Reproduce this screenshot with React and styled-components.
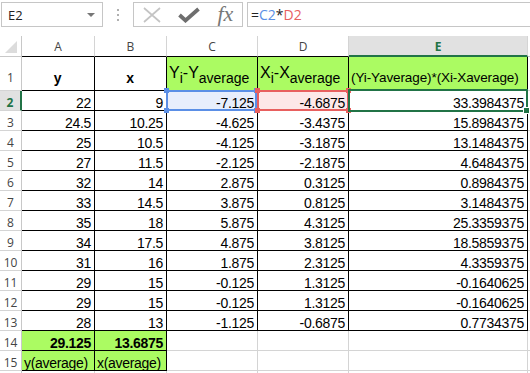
import React from "react";
import styled, { createGlobalStyle } from "styled-components";

const GRID = "#d4d4d4";
const HEAD_LINE = "#c8c8c8";
const BLACK = "#000";
const LIME = "#abfb62";
const XL_GREEN = "#217346";
const REF_BLUE = "#5b8fe6";
const REF_RED = "#e8605f";
const UI_FONT = `"Open Sans", "Noto Sans", Arial, sans-serif`;

const GlobalStyle = createGlobalStyle`
  html, body {
    margin: 0;
    padding: 0;
    background: #fff;
  }
  body {
    overflow: hidden;
  }
  * {
    box-sizing: border-box;
  }
`;

const Page = styled.div`
  width: 530px;
  height: 373px;
  overflow: hidden;
  display: flex;
  flex-direction: column;
  font-family: "Liberation Sans", Arial, sans-serif;
`;

/* formula bar */
const Toolbar = styled.div`
  height: 36px;
  flex: none;
  display: flex;
  align-items: flex-start;
  padding: 2px 0 0 1px;
`;

const NameBox = styled.div`
  width: 102px;
  height: 25px;
  border: 1px solid #c6c6c6;
  display: flex;
  align-items: center;
  justify-content: space-between;
  padding: 0 7px 0 6px;
  font: 13px ${UI_FONT};
  color: #222;
`;

const Caret = styled.span`
  width: 0;
  height: 0;
  border-left: 4px solid transparent;
  border-right: 4px solid transparent;
  border-top: 4px solid #777;
`;

const Dots = styled.div`
  width: 30px;
  height: 25px;
  display: flex;
  flex-direction: column;
  align-items: center;
  justify-content: center;
  gap: 3px;
`;

const Dot = styled.span`
  width: 2px;
  height: 2px;
  background: #b0b0b0;
`;

const FxButtons = styled.div`
  width: 110px;
  height: 25px;
  border: 1px solid #c6c6c6;
  display: flex;
  align-items: center;
  justify-content: space-around;
`;

const FxLabel = styled.span`
  font: italic 22px "Liberation Serif", "DejaVu Serif", serif;
  color: #777;
  line-height: 22px;
  margin-top: -2px;
`;

const FormulaBox = styled.div`
  flex: 1;
  margin-left: 4px;
  height: 25px;
  border: 1px solid #c6c6c6;
  border-right: none;
  display: flex;
  align-items: center;
  padding-left: 3px;
  font: 14px ${UI_FONT};
  color: #222;
`;

const Ref = styled.span`
  color: ${(p) => p.$color};
`;

/* sheet */
const Sheet = styled.div`
  flex: 1;
  display: grid;
  grid-template-columns: 22px 73px 72px 91px 91px 179px 1fr;
  grid-template-rows: 21px 34px repeat(14, 20px) 1fr;
  overflow: hidden;
`;

const Corner = styled.div`
  position: relative;
  border-right: 1px solid ${HEAD_LINE};
  border-bottom: 1px solid ${HEAD_LINE};
  &::after {
    content: "";
    position: absolute;
    right: 4px;
    bottom: 3px;
    border-left: 12px solid transparent;
    border-bottom: 12px solid #dcdcdc;
  }
`;

const ColHead = styled.div`
  display: flex;
  align-items: center;
  justify-content: center;
  padding-top: 1px;
  border-right: ${(p) => (p.$last ? "none" : `1px solid ${GRID}`)};
  border-bottom: ${(p) =>
    p.$active ? `2px solid ${XL_GREEN}` : `1px solid ${p.$edge || HEAD_LINE}`};
  background: ${(p) => (p.$active ? "#e1e1e1" : "#fff")};
  color: ${(p) => (p.$active ? XL_GREEN : "#444")};
  font: ${(p) => (p.$active ? 700 : 400)} 12px ${UI_FONT};
`;

const RowHead = styled.div`
  display: flex;
  align-items: center;
  justify-content: center;
  padding-top: ${(p) => (p.$tall ? 8 : 3)}px;
  border-right: ${(p) =>
    p.$active ? `2px solid ${XL_GREEN}` : `1px solid ${HEAD_LINE}`};
  border-bottom: 1px solid ${GRID};
  background: ${(p) => (p.$active ? "#e1e1e1" : "#fff")};
  color: ${(p) => (p.$active ? XL_GREEN : "#444")};
  font: ${(p) => (p.$active ? 700 : 400)} 12px ${UI_FONT};
  overflow: hidden;
`;

const Cell = styled.div`
  position: relative;
  display: flex;
  align-items: flex-end;
  justify-content: ${(p) =>
    p.$align === "left" ? "flex-start" : p.$align === "center" ? "center" : "flex-end"};
  padding: 0 3px ${(p) => (p.$tall ? 5 : 0)}px 2px;
  background: ${(p) => p.$bg || "#fff"};
  border-right: ${(p) => (p.$last ? "none" : `1px solid ${p.$edge || GRID}`)};
  border-bottom: 1px solid ${(p) => p.$edge || GRID};
  font-size: 14px;
  letter-spacing: -0.3px;
  line-height: 14px;
  font-weight: ${(p) => (p.$bold ? 700 : 400)};
  color: #000;
  white-space: nowrap;
`;

const Big = styled.span`
  font-size: 16px;
  letter-spacing: 0;
  line-height: 16px;
  margin-bottom: 2px;
`;

const Sub = styled.span`
  font-size: 14px;
  vertical-align: -5px;
  line-height: 10px;
`;

const Small = styled.span`
  font-size: 13.5px;
  letter-spacing: -0.1px;
  line-height: 14px;
`;

const Selection = styled.span`
  position: absolute;
  z-index: 2;
  top: ${(p) => (p.$thick ? -2 : -1)}px;
  left: -1px;
  right: ${(p) => (p.$inner ? 0 : -1)}px;
  bottom: ${(p) => (p.$thick ? -2 : -1)}px;
  border: 2px solid ${(p) => p.$color};
  pointer-events: none;
`;

const Handle = styled.span`
  position: absolute;
  width: ${(p) => (p.$big ? 7 : 5)}px;
  height: ${(p) => (p.$big ? 7 : 5)}px;
  background: ${(p) => p.$color};
  border: ${(p) => (p.$big ? "1px solid #fff" : "none")};
  ${(p) => (p.$v === "top" ? "top: -4px;" : "bottom: -4px;")}
  ${(p) => (p.$h === "left" ? "left: -4px;" : "right: -4px;")}
`;

const cols = ["A", "B", "C", "D", "E"];

const rows = [
  ["22", "9", "-7.125", "-4.6875", "33.3984375"],
  ["24.5", "10.25", "-4.625", "-3.4375", "15.8984375"],
  ["25", "10.5", "-4.125", "-3.1875", "13.1484375"],
  ["27", "11.5", "-2.125", "-2.1875", "4.6484375"],
  ["32", "14", "2.875", "0.3125", "0.8984375"],
  ["33", "14.5", "3.875", "0.8125", "3.1484375"],
  ["35", "18", "5.875", "4.3125", "25.3359375"],
  ["34", "17.5", "4.875", "3.8125", "18.5859375"],
  ["31", "16", "1.875", "2.3125", "4.3359375"],
  ["29", "15", "-0.125", "1.3125", "-0.1640625"],
  ["29", "15", "-0.125", "1.3125", "-0.1640625"],
  ["28", "13", "-1.125", "-0.6875", "0.7734375"],
];

const RefBox = ({ color, inner }) => (
  <Selection $color={color} $inner={inner}>
    <Handle $color={color} $v="top" $h="left" />
    <Handle $color={color} $v="top" $h="right" />
    <Handle $color={color} $v="bottom" $h="left" />
    <Handle $color={color} $v="bottom" $h="right" />
  </Selection>
);

const DataCell = ({ row, col, value }) => {
  if (row === 2 && col === 2) {
    return (
      <Cell $edge={BLACK} $bg="#e8eefc">
        {value}
        <RefBox color={REF_BLUE} inner />
      </Cell>
    );
  }
  if (row === 2 && col === 3) {
    return (
      <Cell $edge={BLACK} $bg="#fde8e8">
        {value}
        <RefBox color={REF_RED} />
      </Cell>
    );
  }
  if (row === 2 && col === 4) {
    return (
      <Cell $edge={BLACK}>
        {value}
        <Selection $color={XL_GREEN} $thick>
          <Handle $color={XL_GREEN} $v="bottom" $h="right" $big />
        </Selection>
      </Cell>
    );
  }
  return <Cell $edge={BLACK}>{value}</Cell>;
};

export default function App() {
  return (
    <Page>
      <GlobalStyle />
      <Toolbar>
        <NameBox>
          E2
          <Caret />
        </NameBox>
        <Dots>
          <Dot />
          <Dot />
          <Dot />
        </Dots>
        <FxButtons>
          <svg width="18" height="16" viewBox="0 0 18 16">
            <path d="M1 1 L17 15 M17 1 L1 15" stroke="#c4c4c4" strokeWidth="1.7" fill="none" />
          </svg>
          <svg width="22" height="16" viewBox="0 0 22 16">
            <path d="M1.5 8 L7.5 13.5 L20.5 2" stroke="#6e6e6e" strokeWidth="3.8" fill="none" />
          </svg>
          <FxLabel>fx</FxLabel>
        </FxButtons>
        <FormulaBox>
          =<Ref $color={REF_BLUE}>C2</Ref>*<Ref $color={REF_RED}>D2</Ref>
        </FormulaBox>
      </Toolbar>

      <Sheet>
        <Corner />
        {cols.map((c) => (
          <ColHead key={c} $active={c === "E"} $edge={BLACK}>
            {c}
          </ColHead>
        ))}
        <ColHead $last />

        <RowHead $tall>1</RowHead>
        <Cell $edge={BLACK} $tall $align="center" $bold>
          y
        </Cell>
        <Cell $edge={BLACK} $tall $align="center" $bold>
          x
        </Cell>
        <Cell $edge={BLACK} $tall $align="left" $bg={LIME}>
          <Big>
            Y<Sub>i</Sub>-Y<Sub>average</Sub>
          </Big>
        </Cell>
        <Cell $edge={BLACK} $tall $align="left" $bg={LIME}>
          <Big>
            X<Sub>i</Sub>-X<Sub>average</Sub>
          </Big>
        </Cell>
        <Cell $edge={BLACK} $tall $align="left" $bg={LIME}>
          <Small>(Yi-Yaverage)*(Xi-Xaverage)</Small>
        </Cell>
        <Cell $last />

        {rows.map((r, i) => {
          const n = i + 2;
          return (
            <React.Fragment key={n}>
              <RowHead $active={n === 2}>{n}</RowHead>
              {r.map((v, j) => (
                <DataCell key={j} row={n} col={j} value={v} />
              ))}
              <Cell $last />
            </React.Fragment>
          );
        })}

        <RowHead>14</RowHead>
        <Cell $edge={BLACK} $bg={LIME} $bold>
          29.125
        </Cell>
        <Cell $edge={BLACK} $bg={LIME} $bold>
          13.6875
        </Cell>
        <Cell />
        <Cell />
        <Cell />
        <Cell $last />

        <RowHead>15</RowHead>
        <Cell $edge={BLACK} $bg={LIME} $align="left">
          y(average)
        </Cell>
        <Cell $edge={BLACK} $bg={LIME} $align="left">
          x(average)
        </Cell>
        <Cell />
        <Cell />
        <Cell />
        <Cell $last />

        <RowHead />
        <Cell />
        <Cell />
        <Cell />
        <Cell />
        <Cell />
        <Cell $last />
      </Sheet>
    </Page>
  );
}
